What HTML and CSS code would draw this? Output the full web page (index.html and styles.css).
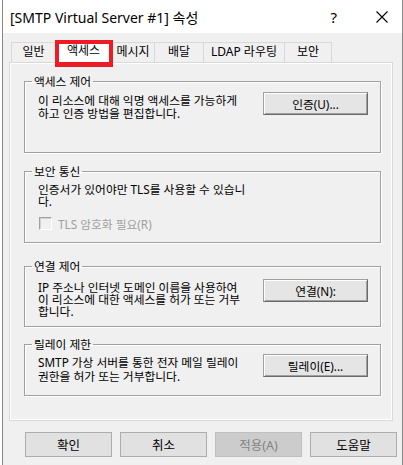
FILE: index.html
```html
<!DOCTYPE html>
<html lang="ko">
<head>
<meta charset="utf-8">
<link rel="stylesheet" href="styles.css">
</head>
<body>
<div class="window">
  <div class="titlebar">
    <span class="title">[SMTP Virtual Server #1] 속성</span>
    <span class="help">?</span>
    <svg class="close" width="12" height="12" viewBox="0 0 12 12"><path d="M0.5 0.5 L11.5 11.5 M11.5 0.5 L0.5 11.5" stroke="#000" stroke-width="1.1" fill="none"/></svg>
  </div>
  <div class="tabs">
    <div class="tab">일반</div>
    <div class="tab selected">액세스<span class="mark"></span></div>
    <div class="tab">메시지</div>
    <div class="tab">배달</div>
    <div class="tab">LDAP 라우팅</div>
    <div class="tab">보안</div>
  </div>
  <div class="panel">
    <fieldset class="group g1">
      <legend>액세스 제어</legend>
      <div class="row">
        <p class="desc">이 리소스에 대해 익명 액세스를 가능하게<br>하고 인증 방법을 편집합니다.</p>
        <button class="btn">인증(U)...</button>
      </div>
    </fieldset>
    <fieldset class="group g2">
      <legend>보안 통신</legend>
      <p class="desc">인증서가 있어야만 TLS를 사용할 수 있습니<br>다.</p>
      <label class="check"><span class="box"></span>TLS 암호화 필요(R)</label>
    </fieldset>
    <fieldset class="group g3">
      <legend>연결 제어</legend>
      <div class="row">
        <p class="desc">IP 주소나 인터넷 도메인 이름을 사용하여<br>이 리소스에 대한 액세스를 허가 또는 거부<br>합니다.</p>
        <button class="btn">연결(N):</button>
      </div>
    </fieldset>
    <fieldset class="group g4">
      <legend>릴레이 제한</legend>
      <div class="row">
        <p class="desc">SMTP 가상 서버를 통한 전자 메일 릴레이<br>권한을 허가 또는 거부합니다.</p>
        <button class="btn">릴레이(E)...</button>
      </div>
    </fieldset>
  </div>
  <div class="actions">
    <button class="dbtn">확인</button>
    <button class="dbtn">취소</button>
    <button class="dbtn disabled">적용(A)</button>
    <button class="dbtn">도움말</button>
  </div>
</div>
</body>
</html>
```

FILE: styles.css
```css
* { box-sizing: border-box; }
html, body { margin: 0; padding: 0; background: #fff; }
body {
  font-family: "Noto Sans", "Noto Sans CJK KR", sans-serif;
  color: #000;
}
.window {
  margin-left: 2px;
  width: 401px;
  height: 465px;
  border-left: 1px solid #888;
  border-right: 1px solid #888;
  background: #f0f0f0;
  display: flex;
  flex-direction: column;
}
.titlebar {
  height: 33px;
  background: #fff;
  display: flex;
  align-items: center;
  padding-left: 7px;
}
.title { font-size: 14px; flex: 1; white-space: nowrap; }
.help { font-size: 15px; margin-right: 39px; }
.close { margin-right: 14px; }

.tabs {
  display: flex;
  margin-top: 9px;
  padding-left: 8px;
  height: 20px;
  position: relative;
  z-index: 1;
}
.tab {
  height: 20px;
  border: 1px solid #d9d9d9;
  border-bottom: none;
  margin-left: -1px;
  font-size: 12px;
  line-height: 18px;
  text-align: center;
  background: #f0f0f0;
}
.tab:first-child { margin-left: 0; width: 45px; }
.tab:nth-child(2) { width: 57px; }
.tab:nth-child(3) { width: 44px; }
.tab:nth-child(4) { width: 50px; }
.tab:nth-child(5) { width: 82px; }
.tab:nth-child(6) { width: 48px; }
.tab.selected {
  background: #fff;
  height: 23px;
  margin-top: -2px;
  line-height: 20px;
  position: relative;
  z-index: 2;
}
.mark {
  position: absolute;
  left: -1px;
  top: -1px;
  width: 58px;
  height: 27px;
  border: 4px solid #ed1c24;
  border-bottom-width: 5px;
}

.panel {
  margin-left: 6px;
  width: 384px;
  height: 359px;
  border: 1px solid #d9d9d9;
  box-shadow: inset 0 0 0 1px #fff;
  padding: 12px 11px 0 14px;
}

.group {
  margin: 0;
  border: 1px solid #a0a0a0;
  box-shadow: inset 1px 1px 0 #fff, 1px 1px 0 #fff;
  padding: 0 12px 0 13px;
  width: 357px;
  font-size: 11.75px;
}
.group legend {
  padding: 0 2px;
  margin-left: -6px;
  line-height: 13px;
}
.g1 { height: 78px; }
.g2 { height: 78px; margin-top: 12px; }
.g3 { height: 67px; margin-top: 17px; }
.g4 { height: 58px; margin-top: 11px; }

.row { display: flex; justify-content: space-between; align-items: flex-start; }
.desc { margin: 0; line-height: 13px; white-space: nowrap; }
.g1 .desc { margin-top: 6px; }
.g1 .btn { margin-top: 4px; }
.g2 .desc { margin-top: 5px; line-height: 12px; }
.g3 .desc { margin-top: 8px; line-height: 12px; }
.g3 .btn { margin-top: 6px; }
.g4 .desc { margin-top: 4px; line-height: 14px; }
.g4 .btn { margin-top: 3px; }

.btn {
  width: 105px;
  height: 23px;
  font-family: inherit;
  font-size: 11.75px;
  color: #000;
  background: #e5e5e5;
  border: 1px solid #6a6a6a;
  border-top-color: #a0a0a0;
  border-left-color: #a0a0a0;
  box-shadow: inset 1px 1px 0 #fff, inset -1px -1px 0 #a0a0a0;
  padding: 0;
  flex: none;
}

.check {
  display: flex;
  align-items: center;
  margin-top: 8px;
  color: #a0a0a0;
}
.box {
  width: 13px;
  height: 13px;
  border: 1px solid #a0a0a0;
  border-right-color: #fff;
  border-bottom-color: #fff;
  box-shadow: inset 1px 1px 0 #d4d4d4;
  margin-left: 1px;
  margin-right: 6px;
  background: #f0f0f0;
}

.actions {
  display: flex;
  gap: 8px;
  padding-left: 22px;
  margin-top: 11px;
}
.dbtn {
  width: 87px;
  height: 25px;
  font-family: inherit;
  font-size: 12.5px;
  color: #000;
  background: #e1e1e1;
  border: 1px solid #adadad;
  padding: 0;
}
.dbtn.disabled {
  background: #cccccc;
  border-color: #bfbfbf;
  color: #838383;
}
```
